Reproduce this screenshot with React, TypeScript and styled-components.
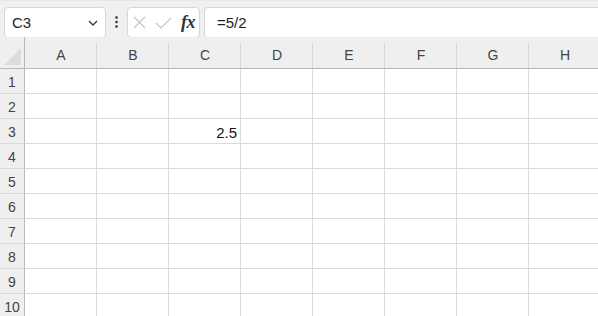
import React from "react";
import styled, { createGlobalStyle } from "styled-components";

const Global = createGlobalStyle`
  html, body { margin: 0; padding: 0; background: #ffffff; }
  body { font-family: "Liberation Sans", Arial, sans-serif; overflow: hidden; }
  * { box-sizing: border-box; }
`;

const Page = styled.div`
  width: 598px;
  height: 316px;
  overflow: hidden;
  display: flex;
  flex-direction: column;
  background: #fff;
`;

const Toolbar = styled.div`
  height: 37px;
  flex: none;
  display: flex;
  align-items: stretch;
  padding: 6px 0 0 4px;
  background: #f0f0f0;
  border-top: 1px solid #e6e6e6;
`;

const Box = styled.div<{ $w?: number; $grow?: boolean }>`
  height: 31px;
  ${(p) => (p.$w ? `width: ${p.$w}px;` : "")}
  ${(p) => (p.$grow ? "flex: 1;" : "flex: none;")}
  background: #fff;
  border: 1px solid #d6d6d6;
  border-radius: 4px;
  display: flex;
  align-items: center;
`;

const NameBox = styled(Box)`
  padding: 0 7px 0 7px;
  justify-content: space-between;
  font-size: 15px;
  color: #222;
`;

const Dots = styled.div`
  width: 21px;
  flex: none;
  display: flex;
  align-items: center;
  justify-content: center;
`;

const FxBox = styled(Box)`
  margin-right: 4px;
  padding: 0 0 0 5px;
`;

const IconSlot = styled.div<{ $w: number; $ml?: number }>`
  width: ${(p) => p.$w}px;
  margin-left: ${(p) => p.$ml ?? 0}px;
  height: 100%;
  display: flex;
  align-items: center;
  justify-content: center;
`;

const Fx = styled.span`
  font-family: "Liberation Serif", "Times New Roman", serif;
  font-style: italic;
  font-weight: bold;
  font-size: 18px;
  color: #333;
  letter-spacing: -0.5px;
`;

const FormulaBox = styled(Box)`
  border-right: none;
  border-radius: 4px 0 0 4px;
  padding-left: 12px;
  font-size: 15px;
  color: #222;
`;

const Grid = styled.div`
  display: grid;
  grid-template-columns: 25px repeat(8, 72px);
  grid-auto-rows: 25px;
  grid-template-rows: 32px;
`;

const Corner = styled.div`
  background: #efefef;
  border-right: 1px solid #b8b8b8;
  border-bottom: 1px solid #b8b8b8;
  position: relative;
`;

const Triangle = styled.div`
  position: absolute;
  right: 3px;
  bottom: 3px;
  width: 0;
  height: 0;
  border-left: 17px solid transparent;
  border-bottom: 17px solid #dcdcdc;
`;

const ColHead = styled.div`
  background: #efefef;
  border-bottom: 1px solid #b8b8b8;
  display: flex;
  align-items: center;
  justify-content: center;
  font-size: 14px;
  color: #444;
  position: relative;
  padding-top: 4px;
  &::after {
    content: "";
    position: absolute;
    right: 0;
    top: 6px;
    bottom: 0;
    width: 1px;
    background: #d8d8d8;
  }
`;

const RowHead = styled.div`
  background: #efefef;
  border-right: 1px solid #b8b8b8;
  border-bottom: 1px solid #dadada;
  display: flex;
  align-items: center;
  justify-content: center;
  font-size: 14px;
  color: #444;
  padding-top: 2px;
`;

const Cell = styled.div<{ $num?: boolean }>`
  border-right: 1px solid #dadada;
  border-bottom: 1px solid #dadada;
  display: flex;
  align-items: center;
  justify-content: ${(p) => (p.$num ? "flex-end" : "flex-start")};
  padding: 2px 3px 0 3px;
  font-size: 15px;
  color: #111;
`;

const cols = ["A", "B", "C", "D", "E", "F", "G", "H"];
const rows = [1, 2, 3, 4, 5, 6, 7, 8, 9, 10];
const data: Record<string, string> = { C3: "2.5" };

export default function App() {
  return (
    <Page>
      <Global />
      <Toolbar>
        <NameBox $w={102}>
          <span>C3</span>
          <svg width="10" height="6" viewBox="0 0 10 6">
            <path d="M1 1 L5 5 L9 1" fill="none" stroke="#333" strokeWidth="1.3" />
          </svg>
        </NameBox>
        <Dots>
          <svg width="3" height="12" viewBox="0 0 3 12">
            <circle cx="1.5" cy="1.5" r="1.3" fill="#333" />
            <circle cx="1.5" cy="6" r="1.3" fill="#333" />
            <circle cx="1.5" cy="10.5" r="1.3" fill="#333" />
          </svg>
        </Dots>
        <FxBox $w={73}>
          <IconSlot $w={13}>
            <svg width="13" height="13" viewBox="0 0 13 13">
              <path d="M1 1 L12 12 M12 1 L1 12" stroke="#c4c4c4" strokeWidth="1.1" fill="none" />
            </svg>
          </IconSlot>
          <IconSlot $w={17} $ml={9}>
            <svg width="17" height="12" viewBox="0 0 17 12">
              <path d="M1 6 L6 11 L16 1" stroke="#c4c4c4" strokeWidth="1.1" fill="none" />
            </svg>
          </IconSlot>
          <IconSlot $w={16} $ml={8}>
            <Fx>fx</Fx>
          </IconSlot>
        </FxBox>
        <FormulaBox $grow>=5/2</FormulaBox>
      </Toolbar>
      <Grid>
        <Corner>
          <Triangle />
        </Corner>
        {cols.map((c) => (
          <ColHead key={c}>{c}</ColHead>
        ))}
        {rows.map((r) => (
          <React.Fragment key={r}>
            <RowHead>{r}</RowHead>
            {cols.map((c) => {
              const v = data[`${c}${r}`];
              return (
                <Cell key={c} $num={!!v}>
                  {v}
                </Cell>
              );
            })}
          </React.Fragment>
        ))}
      </Grid>
    </Page>
  );
}
